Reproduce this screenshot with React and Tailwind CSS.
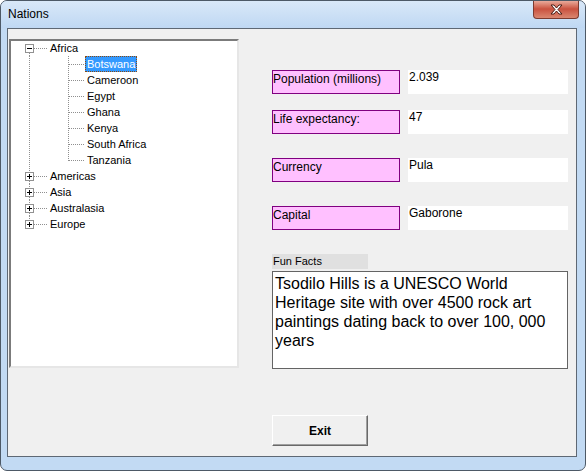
import React from "react";

const sans = { fontFamily: '"Liberation Sans", Arial, sans-serif' };

const DOT = "#8f8f8f";

const ExpanderBox = ({ open }) => (
  <>
    <rect x="14.5" y="4.5" width="8" height="8" fill="#fff" stroke="#919191" />
    <line x1="16" x2="21" y1="8.5" y2="8.5" stroke="#000" />
    {!open && <line x1="18.5" x2="18.5" y1="6" y2="11" stroke="#000" />}
  </>
);

// top-level node: expander box, root trunk and the branch to the label
const RootRow = ({ label, open, first, last }) => (
  <div className="flex h-[16px] items-center">
    <svg width="37" height="16" className="shrink-0">
      {!first && (
        <line x1="18.5" x2="18.5" y1="0" y2="4" stroke={DOT} strokeDasharray="1 1" />
      )}
      {!last && (
        <line x1="18.5" x2="18.5" y1="13" y2="16" stroke={DOT} strokeDasharray="1 1" />
      )}
      <line x1="23" x2="37" y1="8.5" y2="8.5" stroke={DOT} strokeDasharray="1 1" />
      <ExpanderBox open={open} />
    </svg>
    <span className="h-[16px] px-[1px] border border-transparent leading-[14px]">{label}</span>
  </div>
);

// child node under an expanded parent
const ChildRow = ({ label, last, selected }) => (
  <div className="flex h-[16px] items-center">
    <svg width="74" height="16" className="shrink-0">
      <line x1="18.5" x2="18.5" y1="0" y2="16" stroke={DOT} strokeDasharray="1 1" />
      <line
        x1="57.5"
        x2="57.5"
        y1="0"
        y2={last ? 9 : 16}
        stroke={DOT}
        strokeDasharray="1 1"
      />
      <line x1="58" x2="74" y1="8.5" y2="8.5" stroke={DOT} strokeDasharray="1 1" />
    </svg>
    <span
      className={
        selected
          ? "h-[16px] px-[1px] border border-dotted border-[#8a4a10] bg-[#3399ff] text-white leading-[14px]"
          : "h-[16px] px-[1px] border border-transparent leading-[14px]"
      }
    >
      {label}
    </span>
  </div>
);

const africa = ["Botswana", "Cameroon", "Egypt", "Ghana", "Kenya", "South Africa", "Tanzania"];
const others = ["Americas", "Asia", "Australasia", "Europe"];

const facts = [
  { label: "Population (millions)", value: "2.039", gap: "mt-0" },
  { label: "Life expectancy:", value: "47", gap: "mt-[16px]" },
  { label: "Currency", value: "Pula", gap: "mt-[24px]" },
  { label: "Capital", value: "Gaborone", gap: "mt-[24px]" },
];

const App = () => {
  return (
    <div className="w-[586px] h-[471px] bg-white" style={sans}>
      <div className="flex flex-col w-[586px] h-[471px] rounded-[7px] border border-[#4d5966] bg-[#c2daf3] overflow-hidden">
        {/* Title bar */}
        <div className="flex h-[27px] shrink-0 items-start justify-between bg-gradient-to-b from-[#d9e8f8] to-[#bfd8f3]">
          <span className="pl-[7px] pt-[6px] text-[12px] leading-[15px] text-black">Nations</span>
          <button className="mr-[6px] mt-[-1px] flex h-[19px] w-[46px] items-center justify-center rounded-b-[4px] border border-t-0 border-[#7d3b30] bg-gradient-to-b from-[#ecb4a6] via-[#c9513f] to-[#da8670]">
            <svg width="13" height="11" viewBox="0 0 13 11">
              <path
                d="M1 1h3l2.5 3 2.5-3h3l-4 4.5 4 4.5h-3L6.5 7 4 10H1l4-4.5z"
                fill="#fff"
                stroke="#4a1c14"
                strokeWidth="1"
                strokeLinejoin="round"
              />
            </svg>
          </button>
        </div>

        {/* Client area */}
        <div className="ml-[6px] mr-[8px] mb-[13px] flex flex-1 border border-[#5e6874] bg-[#f0f0f0]">
          {/* Tree view */}
          <div className="ml-[1px] mt-[10px] h-[329px] w-[230px] border-2 border-t-[#7b7b7b] border-l-[#7b7b7b] border-r-[#e6e6e6] border-b-[#e6e6e6] bg-white text-[11px] text-black">
            <div className="-mt-[1px]">
              <RootRow label="Africa" open first />
              {africa.map((name, i) => (
                <ChildRow
                  key={name}
                  label={name}
                  selected={i === 0}
                  last={i === africa.length - 1}
                />
              ))}
              {others.map((name, i) => (
                <RootRow key={name} label={name} last={i === others.length - 1} />
              ))}
            </div>
          </div>

          {/* Details */}
          <div className="ml-[33px] mt-[41px] flex flex-col text-[12px] leading-[14px] text-black">
            {facts.map((f) => (
              <div key={f.label} className={`flex h-[24px] gap-[8px] ${f.gap}`}>
                <div className="w-[128px] border border-[#800080] bg-[#ffc0ff] pt-[1px]">{f.label}</div>
                <div className="w-[160px] bg-white pl-[1px]">{f.value}</div>
              </div>
            ))}

            <div className="mt-[24px] h-[15px] w-[96px] bg-[#e0e0e0] pl-[1px] pt-[1px] text-[11px] leading-[13px]">
              Fun Facts
            </div>
            <div className="mt-[2px] h-[98px] w-[296px] border border-[#646464] bg-white pl-[2px] pr-[8px] pt-[2px] text-[16px] leading-[19px]">
              Tsodilo Hills is a UNESCO World Heritage site with over 4500 rock art paintings dating back to over 100, 000 years
            </div>

            <button className="mt-[46px] h-[31px] w-[96px] border border-t-white border-l-white border-r-[#696969] border-b-[#696969] bg-[#f0f0f0] text-[12px] font-bold shadow-[inset_-1px_-1px_0_#a0a0a0]">
              Exit
            </button>
          </div>
        </div>
      </div>
    </div>
  );
};

export default App;
